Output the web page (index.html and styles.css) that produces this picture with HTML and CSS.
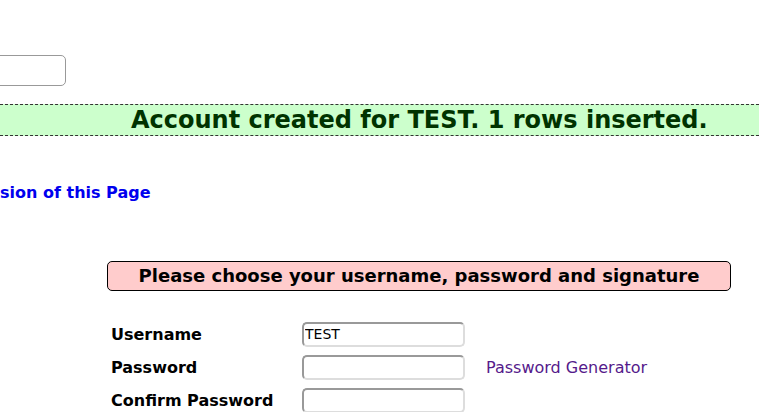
FILE: index.html
```html
<!DOCTYPE html>
<html>
<head>
<meta charset="utf-8">
<link rel="stylesheet" href="styles.css">
</head>
<body>
<div class="top">
  <input class="search" type="text">
</div>
<div class="banner">Account created for TEST. 1 rows inserted.</div>
<div class="switch"><a href="#" class="switch-link">sion of this Page</a></div>
<div class="form-area">
  <div class="form-title">Please choose your username, password and signature</div>
  <div class="rows">
    <div class="row">
      <label class="lbl">Username</label>
      <input class="field" type="text" value="TEST">
    </div>
    <div class="row">
      <label class="lbl">Password</label>
      <input class="field" type="password">
      <a href="#" class="gen">Password Generator</a>
    </div>
    <div class="row">
      <label class="lbl">Confirm Password</label>
      <input class="field" type="password">
    </div>
  </div>
</div>
</body>
</html>
```
FILE: styles.css
```css
html, body {
  margin: 0;
  padding: 0;
  background: #fff;
  overflow: hidden;
  font-family: "DejaVu Sans", sans-serif;
}
.top {
  height: 104px;
  display: flex;
  align-items: flex-start;
}
.search {
  margin-top: 55px;
  margin-left: -140px;
  width: 206px;
  height: 31px;
  box-sizing: border-box;
  border: 1px solid #999;
  border-radius: 5px;
  background: #fff;
}
.banner {
  box-sizing: border-box;
  height: 32px;
  background: #ccffcc;
  border-top: 1px dashed #333;
  border-bottom: 1px dashed #333;
  color: #003300;
  font-weight: bold;
  font-size: 24px;
  line-height: 31px;
  padding-left: 131px;
  white-space: nowrap;
}
.switch {
  margin-top: 44px;
  height: 26px;
  font-size: 16px;
  font-weight: bold;
  line-height: 26px;
}
.switch-link {
  color: #0000ee;
  text-decoration: none;
}
.form-area {
  margin-top: 55px;
  margin-left: 107px;
  width: 624px;
}
.form-title {
  box-sizing: border-box;
  height: 30px;
  border: 1px solid #000;
  border-radius: 5px;
  background: #ffcccc;
  font-weight: bold;
  font-size: 18px;
  line-height: 27px;
  text-align: center;
  color: #000;
}
.rows {
  margin-top: 31px;
  display: flex;
  flex-direction: column;
  gap: 9px;
}
.row {
  display: flex;
  align-items: center;
  height: 24px;
}
.lbl {
  width: 191px;
  padding-left: 4px;
  font-weight: bold;
  font-size: 16px;
  color: #000;
}
.field {
  box-sizing: border-box;
  width: 163px;
  height: 25px;
  border: 2px solid #999;
  border-right-color: #ddd;
  border-bottom-color: #ddd;
  border-radius: 5px;
  padding: 0 1px;
  font-family: "DejaVu Sans", sans-serif;
  font-size: 14px;
  color: #000;
}
.gen {
  margin-left: 21px;
  font-size: 16px;
  color: #551a8b;
  text-decoration: none;
}
```
